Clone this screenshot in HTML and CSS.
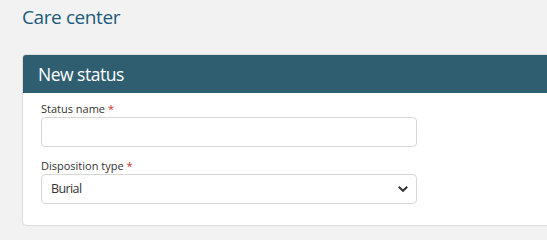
FILE: index.html
```html
<!DOCTYPE html>
<html lang="en">
<head>
<meta charset="utf-8">
<title>Care center</title>
<link rel="stylesheet" href="styles.css">
</head>
<body>
<h1 class="page-title">Care center</h1>
<section class="card">
  <header class="card-header">New status</header>
  <div class="card-body">
    <div class="field">
      <label class="field-label" for="status-name">Status name <span class="req">*</span></label>
      <input class="text-input" id="status-name" type="text">
    </div>
    <div class="field">
      <label class="field-label" for="disposition">Disposition type <span class="req">*</span></label>
      <div class="select-box" id="disposition">
        <span class="select-value">Burial</span>
        <svg class="chevron" width="10" height="7" viewBox="0 0 10 7" aria-hidden="true"><path d="M1.5 1.5 L5 4.8 L8.5 1.5" fill="none" stroke="#333" stroke-width="2" stroke-linecap="square"/></svg>
      </div>
    </div>
  </div>
</section>
</body>
</html>
```
FILE: styles.css
```css
html, body {
  margin: 0;
  padding: 0;
  overflow: hidden;
}
body {
  background: #f2f2f2;
  font-family: "Open Sans", "Noto Sans", sans-serif;
  color: #333;
  width: 547px;
  height: 236px;
}
.page-title {
  margin: 0;
  padding: 3px 0 0 22px;
  font-size: 19px;
  letter-spacing: -0.4px;
  line-height: 28px;
  font-weight: 400;
  color: #1d5b7b;
}
.card {
  margin: 23px 0 0 22px;
  width: 560px;
  background: #fff;
  border: 1px solid #dcdcdc;
  border-radius: 4px;
  overflow: hidden;
  box-sizing: border-box;
}
.card-header {
  background: #2f5e71;
  color: #fff;
  font-size: 17.5px;
  letter-spacing: -0.5px;
  line-height: 38px;
  padding-left: 15px;
}
.card-body {
  padding: 8px 18px 21px;
  display: flex;
  flex-direction: column;
  gap: 11px;
}
.field {
  display: flex;
  flex-direction: column;
}
.field-label {
  font-size: 11px;
  line-height: 16px;
  color: #333;
}
.req {
  color: #c9302c;
}
.text-input, .select-box {
  width: 376px;
  height: 30px;
  box-sizing: border-box;
  border: 1px solid #d6d6d6;
  border-radius: 4px;
  background: #fff;
  margin: 0;
  font-family: inherit;
}
.select-box {
  display: flex;
  align-items: center;
  justify-content: space-between;
  padding: 0 8px 0 9px;
}
.select-value {
  font-size: 12.5px;
  letter-spacing: -0.6px;
  color: #333;
  padding-bottom: 2px;
}
.chevron {
  display: block;
}
```
